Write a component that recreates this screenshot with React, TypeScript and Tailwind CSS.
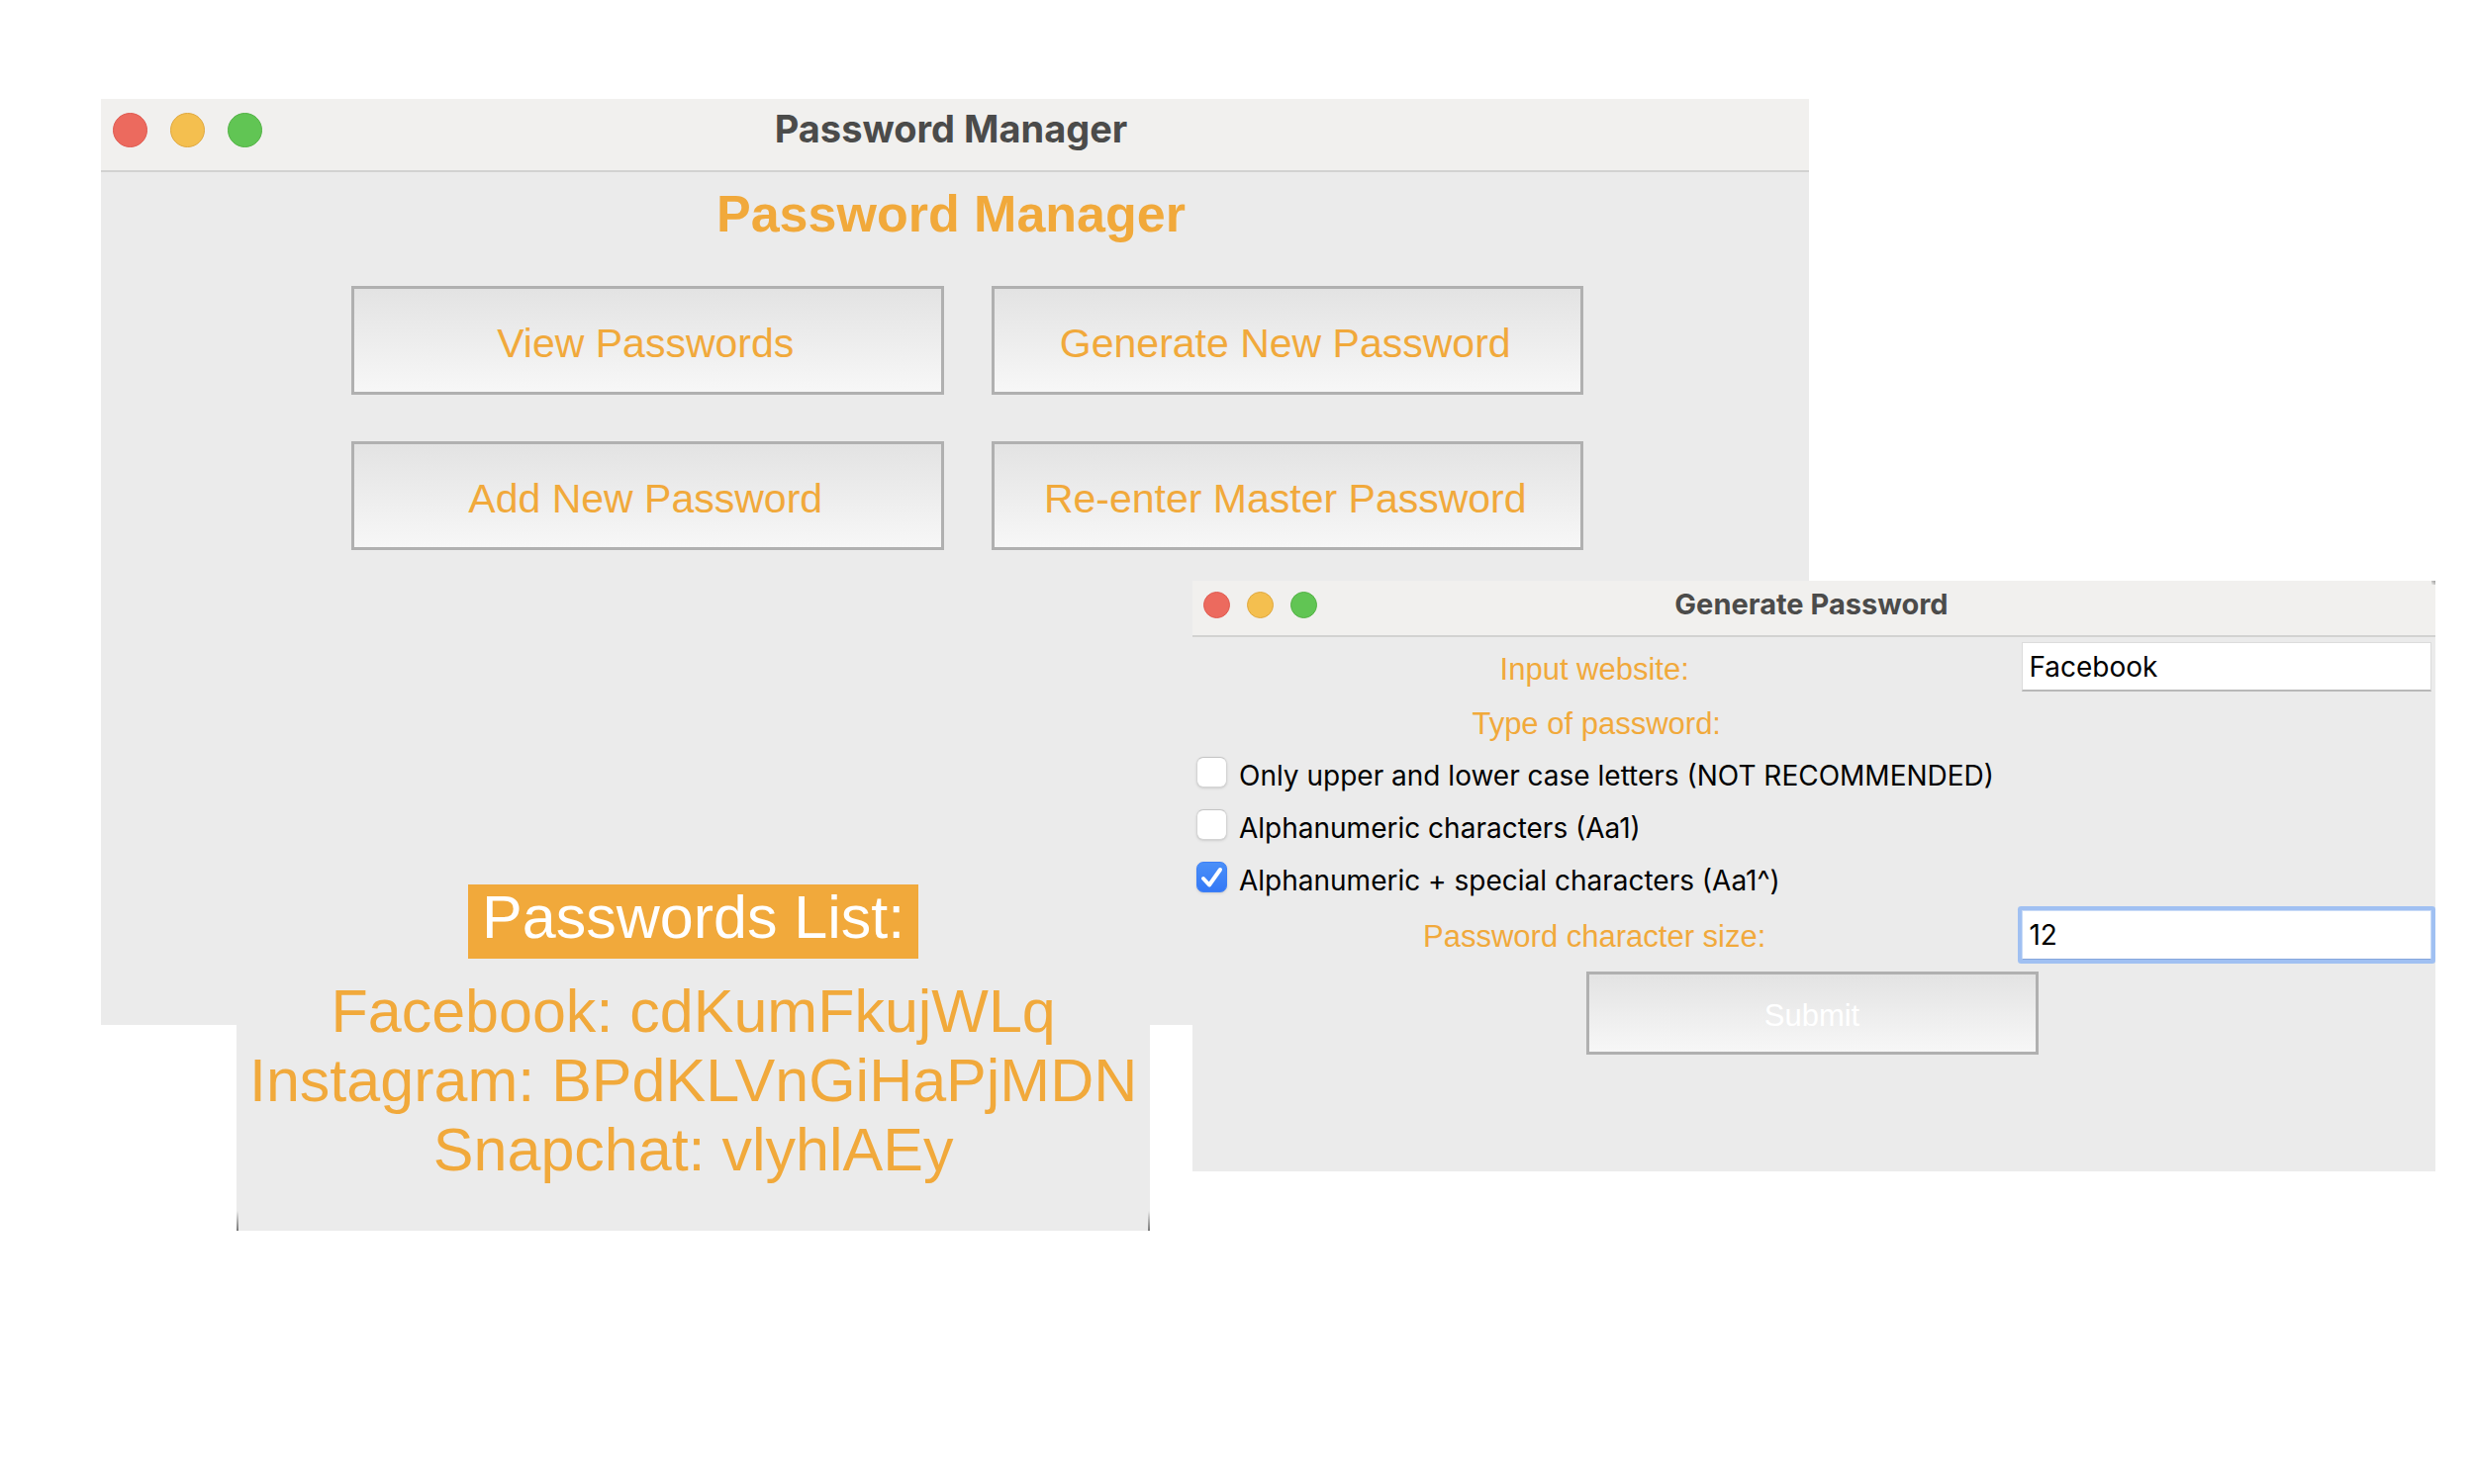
import React, { useId, useState } from "react";

const LIGHTS = [
  { name: "Close", color: "bg-[#ec6a5e] border-[#e05a50]" },
  { name: "Minimize", color: "bg-[#f4bf4f] border-[#e0a83e]" },
  { name: "Zoom", color: "bg-[#61c554] border-[#52b244]" },
];

function TitleBar({ title, large = false }: { title: string; large?: boolean }) {
  return (
    <header
      className={`grid grid-cols-[1fr_auto_1fr] items-center border-b-2 border-[#d2d2d1] bg-[#f1f0ee] ${
        large ? "h-[74px] pr-5 pb-3 pl-3" : "h-[57px] pr-4 pb-2 pl-[11px]"
      }`}
    >
      <div className={`flex ${large ? "gap-[23px] pt-0.5" : "gap-[17px] pt-0.5"}`}>
        {LIGHTS.map((l) => (
          <button
            key={l.name}
            type="button"
            aria-label={l.name}
            className={`rounded-full border ${l.color} ${large ? "size-[35px]" : "size-[27px]"}`}
          />
        ))}
      </div>
      <h1
        className={`font-[Inter,sans-serif] font-bold text-[#4b4b4a] ${
          large ? "text-[38px] leading-[48px]" : "text-[29px] leading-[36px]"
        }`}
      >
        {title}
      </h1>
    </header>
  );
}

function MenuButton({ children }: { children: React.ReactNode }) {
  return (
    <button
      type="button"
      className="h-[110px] border-3 border-[#b0b0b0] bg-linear-to-b from-[#e3e3e3] to-[#f7f7f7] pt-2 pr-1 text-[41px] text-[#f1a93b]"
    >
      {children}
    </button>
  );
}

function ManagerWindow() {
  return (
    <section className="absolute top-[100px] right-[672px] left-[102px] min-h-[936px] bg-[#ebebeb]">
      <TitleBar title="Password Manager" large />
      <h2 className="pt-3 pr-2 text-center text-[52px] leading-[60px] font-bold text-[#f1a93b]">
        Password Manager
      </h2>
      <nav className="mt-[43px] grid grid-cols-2 gap-x-12 gap-y-[47px] pr-[228px] pl-[253px]">
        <MenuButton>View Passwords</MenuButton>
        <MenuButton>Generate New Password</MenuButton>
        <MenuButton>Add New Password</MenuButton>
        <MenuButton>Re-enter Master Password</MenuButton>
      </nav>
    </section>
  );
}

const PASSWORDS = [
  { site: "Facebook", value: "cdKumFkujWLq" },
  { site: "Instagram", value: "BPdKLVnGiHaPjMDN" },
  { site: "Snapchat", value: "vlyhlAEy" },
];

function PasswordList() {
  return (
    <section className="absolute top-[894px] left-[239px] flex w-fit flex-col items-center bg-[#ebebeb] px-[13px] pb-[47px] text-[61px]">
      <h2 className="bg-[#f1a93b] px-3.5 pb-[9px] leading-[66px] text-white">Passwords List:</h2>
      <ul className="mt-[18px] text-center leading-[70px] text-[#f1a93b]">
        {PASSWORDS.map((p) => (
          <li key={p.site}>
            {p.site}: {p.value}
          </li>
        ))}
      </ul>
      <span className="absolute bottom-0 left-0 h-5 w-0.5 bg-linear-to-b from-[#ebebeb] to-[#777777]" />
      <span className="absolute right-0 bottom-0 h-5 w-0.5 bg-linear-to-b from-[#ebebeb] to-[#777777]" />
    </section>
  );
}

function CheckOption({ label, initial = false }: { label: string; initial?: boolean }) {
  const [on, setOn] = useState(initial);
  return (
    <label className="col-span-2 flex h-[53px] items-center gap-3 pl-1 font-[Inter,sans-serif] text-[28px] text-black">
      <span className="mb-1.5 grid">
        <input
          type="checkbox"
          checked={on}
          onChange={() => setOn(!on)}
          className="col-start-1 row-start-1 size-[31px] appearance-none rounded-[7px] border border-[#d4d4d4] border-t-[#c4c4c4] bg-white shadow-sm checked:border-[#3d80f6] checked:bg-linear-to-b checked:from-[#4a8ff8] checked:to-[#3478f6]"
        />
        {on && (
          <svg
            viewBox="0 0 31 31"
            className="pointer-events-none col-start-1 row-start-1 size-[31px]"
            fill="none"
            stroke="white"
            strokeWidth="4"
            strokeLinecap="round"
            strokeLinejoin="round"
            aria-hidden="true"
          >
            <path d="M7 17 L13 23.500 L24 8" />
          </svg>
        )}
      </span>
      {label}
    </label>
  );
}

function Field({
  label,
  initial,
  row,
  input,
}: {
  label: string;
  initial: string;
  row: string;
  input: string;
}) {
  const id = useId();
  return (
    <>
      <label htmlFor={id} className={`flex items-center justify-center pt-1.5 pr-1 text-[31px] text-[#f1a93b] ${row}`}>
        {label}
      </label>
      <div className="flex items-center pr-1 pl-[22px]">
        <input
          id={id}
          type="text"
          defaultValue={initial}
          className={`h-[50px] w-full bg-white px-1.5 font-[Inter,sans-serif] text-[28px] text-black outline-none ${input}`}
        />
      </div>
    </>
  );
}

function GenerateWindow() {
  return (
    <section className="absolute top-[587px] right-[39px] left-[1205px] min-h-[597px] bg-[#ebebeb]">
      <TitleBar title="Generate Password" />
      <span className="absolute top-0 right-0 size-1 bg-linear-to-bl from-[#999999] to-[#f1f0ee]" />
      <form onSubmit={(e) => e.preventDefault()} className="flex flex-col items-center">
        <div className="grid w-full grid-cols-[65%_35%]">
          <Field
            label="Input website:"
            initial="Facebook"
            row="h-[60px]"
            input="border border-[#dcdcdc] border-b-2 border-b-[#b8b8b8]"
          />
          <p className="flex h-[53px] items-center justify-center pt-1 text-[31px] text-[#f1a93b]">
            Type of password:
          </p>
          <CheckOption label="Only upper and lower case letters (NOT RECOMMENDED)" />
          <CheckOption label="Alphanumeric characters (Aa1)" />
          <CheckOption label="Alphanumeric + special characters (Aa1^)" initial />
          <Field
            label="Password character size:"
            initial="12"
            row="h-[57px]"
            input="rounded-[1px] border border-[#c9dbf7] border-b-[#86a6dc] ring-4 ring-[#a0c0f2]"
          />
        </div>
        <button
          type="submit"
          className="mt-[9px] mr-1 h-[84px] w-[457px] border-3 border-[#b0b0b0] bg-linear-to-b from-[#e3e3e3] to-[#f7f7f7] pt-1.5 text-[31px] text-white"
        >
          Submit
        </button>
      </form>
    </section>
  );
}

export default function App() {
  return (
    <main className="relative min-h-screen overflow-hidden bg-white font-['Liberation_Sans',Arial,sans-serif]">
      <ManagerWindow />
      <PasswordList />
      <GenerateWindow />
    </main>
  );
}
